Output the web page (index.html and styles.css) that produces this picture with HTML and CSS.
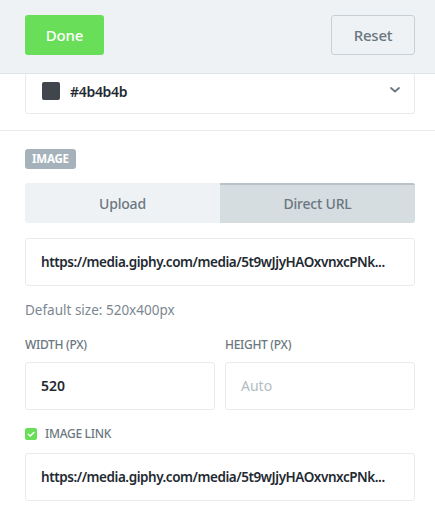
FILE: index.html
```html
<!DOCTYPE html>
<html lang="en">
<head>
    <meta charset="UTF-8">
    <title>Image settings</title>
    <link rel="stylesheet" href="styles.css">
</head>
<body>
    <div class="toolbar">
        <button class="btn btn-done">Done</button>
        <button class="btn btn-reset">Reset</button>
    </div>

    <div class="section top-section">
        <div class="color-select">
            <span class="swatch"></span>
            <span class="color-value">#4b4b4b</span>
            <svg class="chevron" width="10" height="6" viewBox="0 0 10 6">
                <path d="M1 1 L5 4.5 L9 1" fill="none" stroke="#6b7780" stroke-width="1.8" stroke-linecap="round" stroke-linejoin="round"/>
            </svg>
        </div>
    </div>

    <div class="section">
        <div class="badge">IMAGE</div>

        <div class="tabs">
            <div class="tab">Upload</div>
            <div class="tab active">Direct URL</div>
        </div>

        <div class="field url">https://media.giphy.com/media/5t9wJjyHAOxvnxcPNk...</div>

        <p class="hint">Default size: 520x400px</p>

        <div class="size-row">
            <div class="size-col">
                <label class="label">WIDTH (PX)</label>
                <div class="field">520</div>
            </div>
            <div class="size-col">
                <label class="label">HEIGHT (PX)</label>
                <div class="field placeholder">Auto</div>
            </div>
        </div>

        <div class="check-row">
            <span class="checkbox">
                <svg width="12" height="12" viewBox="0 0 12 12">
                    <path d="M3.3 6.2 L5.2 8 L8.8 4.4" fill="none" stroke="#fff" stroke-width="1.4" stroke-linecap="round" stroke-linejoin="round"/>
                </svg>
            </span>
            <span class="label check-label">IMAGE LINK</span>
        </div>

        <div class="field url link-url">https://media.giphy.com/media/5t9wJjyHAOxvnxcPNk...</div>
    </div>
</body>
</html>
```

FILE: styles.css
```css
body {
    margin: 0;
    font-family: "Noto Sans", "Open Sans", sans-serif;
    background: #fff;
    color: #1f2a33;
}
.toolbar {
    display: flex;
    justify-content: space-between;
    padding: 15px 20px 18px 25px;
    background: #eef2f5;
    border-bottom: 1px solid #dfe4e8;
}
.btn {
    height: 40px;
    border-radius: 3px;
    font-family: inherit;
    font-size: 15px;
    font-weight: 500;
    letter-spacing: -0.2px;
}
.btn-done {
    width: 79px;
    background: #69de59;
    border: none;
    color: #fff;
}
.btn-reset {
    width: 84px;
    background: #eef2f5;
    border: 1px solid #c9d0d5;
    color: #6b7780;
}
.section {
    padding: 0 20px 0 25px;
}
.top-section {
    padding-bottom: 16px;
    border-bottom: 1px solid #e8ecef;
}
.color-select {
    display: flex;
    align-items: center;
    height: 34px;
    padding: 0 14px 5px 16px;
    border: 1px solid #e8ecef;
    border-top: none;
    border-radius: 0 0 3px 3px;
}
.swatch {
    width: 18px;
    height: 18px;
    border-radius: 2px;
    background: #41464c;
    margin-right: 10px;
}
.color-value {
    flex: 1;
    font-size: 14px;
    font-weight: 600;
    letter-spacing: -0.3px;
}
.chevron {
    margin-top: -2px;
}
.badge {
    width: fit-content;
    margin-top: 18px;
    padding: 0 7px;
    height: 20px;
    line-height: 20px;
    border-radius: 3px;
    background: #a6b2bb;
    color: #fff;
    font-size: 11.5px;
    font-weight: 700;
    letter-spacing: -0.2px;
}
.tabs {
    display: flex;
    margin-top: 14px;
    height: 40px;
    border-radius: 3px;
    overflow: hidden;
    background: #eef2f5;
}
.tab {
    flex: 1;
    display: flex;
    align-items: center;
    justify-content: center;
    font-size: 14px;
    font-weight: 500;
    letter-spacing: -0.2px;
    color: #6b7780;
}
.tab.active {
    background: #d6dde1;
    border-top: 2px solid #bac2c7;
    padding-bottom: 2px;
}
.field {
    height: 46px;
    line-height: 46px;
    padding: 0 15px;
    border: 1px solid #e8ecef;
    border-radius: 3px;
    font-size: 14px;
    font-weight: 600;
    white-space: nowrap;
    overflow: hidden;
}
.url {
    margin-top: 15px;
    font-size: 13.5px;
    letter-spacing: -0.45px;
}
.hint {
    margin: 15px 0 0;
    font-size: 13.5px;
    line-height: 18px;
    color: #7b8790;
}
.size-row {
    display: flex;
    gap: 10px;
    margin-top: 18px;
}
.size-col {
    flex: 1;
}
.label {
    display: block;
    font-size: 12px;
    line-height: 16px;
    font-weight: 500;
    letter-spacing: -0.3px;
    color: #6b7780;
    margin-bottom: 9px;
}
.placeholder {
    font-weight: 400;
    color: #b2bcc2;
}
.check-row {
    display: flex;
    align-items: center;
    margin-top: 16px;
}
.checkbox {
    display: flex;
    width: 12px;
    height: 12px;
    border-radius: 2px;
    background: #69de59;
    margin-right: 8px;
}
.check-label {
    margin: 0;
}
.link-url {
    margin-top: 11px;
}
```
